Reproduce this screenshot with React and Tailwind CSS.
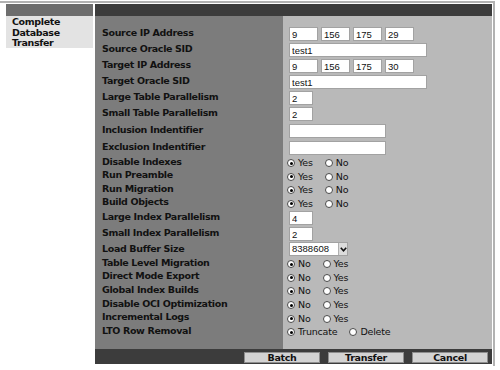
import React from "react";

function Radio({ checked }) {
  return (
    <span className="inline-flex items-center justify-center w-[8px] h-[8px] rounded-full border border-[#4a4a4a] bg-white shrink-0">
      {checked && <span className="w-[3px] h-[3px] rounded-full bg-black" />}
    </span>
  );
}

function RadioGroup({ options }) {
  return (
    <div className="flex items-center pl-[4px] pt-[3px]">
      {options.map((o, i) => (
        <div key={i} className="flex items-center mr-[12px]">
          <Radio checked={o.checked} />
          <span className="ml-[3px] text-[9.5px] leading-[10px] tracking-[-0.2px] text-[#111] font-['DejaVu_Sans',sans-serif]">
            {o.label}
          </span>
        </div>
      ))}
    </div>
  );
}

function Box({ value, className }) {
  return (
    <input
      readOnly
      value={value}
      className={
        "h-[14px] bg-white border border-[#a2a2a2] px-[2px] text-[9.5px] leading-[12px] text-[#111] font-['Liberation_Sans',Arial,sans-serif] outline-none " +
        className
      }
    />
  );
}

function IpBoxes({ parts }) {
  return (
    <div className="flex gap-[3px] pl-[6px] pt-[2px]">
      {parts.map((p, i) => (
        <Box key={i} value={p} className="w-[29px]" />
      ))}
    </div>
  );
}

function Field({ value, className }) {
  return (
    <div className="flex pl-[6px] pt-[2px]">
      <Box value={value} className={className} />
    </div>
  );
}

function SelectBox() {
  return (
    <div className="flex pl-[6px] pt-[1px]">
      <div className="flex w-[59px] h-[14px] bg-white border border-[#a2a2a2]">
        <span className="flex-1 pl-[2px] text-[9.5px] leading-[12px] text-[#111] font-['Liberation_Sans',Arial,sans-serif]">
          8388608
        </span>
        <span className="w-[9px] h-full bg-[#dcdcdc] border-l border-[#b0b0b0] flex items-center justify-center">
          <svg width="7" height="5" viewBox="0 0 7 5">
            <path d="M0.8 0.8 L3.5 3.8 L6.2 0.8" fill="none" stroke="#111" strokeWidth="1.6" />
          </svg>
        </span>
      </div>
    </div>
  );
}

const yesNo = [
  { label: "Yes", checked: true },
  { label: "No", checked: false },
];
const noYes = [
  { label: "No", checked: true },
  { label: "Yes", checked: false },
];

const rows = [
  { label: "Source IP Address", h: "h-[16px]", el: <IpBoxes parts={["9", "156", "175", "29"]} /> },
  { label: "Source Oracle SID", h: "h-[16px]", el: <Field value="test1" className="w-[138px]" /> },
  { label: "Target IP Address", h: "h-[16px]", el: <IpBoxes parts={["9", "156", "175", "30"]} /> },
  { label: "Target Oracle SID", h: "h-[16px]", el: <Field value="test1" className="w-[138px]" /> },
  { label: "Large Table Parallelism", h: "h-[16px]", el: <Field value="2" className="w-[24px]" /> },
  { label: "Small Table Parallelism", h: "h-[16px]", el: <Field value="2" className="w-[24px]" /> },
  { label: "Inclusion Indentifier", h: "h-[17px]", el: <Field value="" className="w-[97px]" /> },
  { label: "Exclusion Indentifier", h: "h-[17px]", el: <Field value="" className="w-[97px]" /> },
  { label: "Disable Indexes", h: "h-[13.5px]", el: <RadioGroup options={yesNo} /> },
  { label: "Run Preamble", h: "h-[13.5px]", el: <RadioGroup options={yesNo} /> },
  { label: "Run Migration", h: "h-[13.5px]", el: <RadioGroup options={yesNo} /> },
  { label: "Build Objects", h: "h-[13.5px]", el: <RadioGroup options={yesNo} /> },
  { label: "Large Index Parallelism", h: "h-[16px]", el: <Field value="4" className="w-[24px]" /> },
  { label: "Small Index Parallelism", h: "h-[16px]", el: <Field value="2" className="w-[24px]" /> },
  { label: "Load Buffer Size", h: "h-[15px]", el: <SelectBox /> },
  { label: "Table Level Migration", h: "h-[13.6px]", el: <RadioGroup options={noYes} /> },
  { label: "Direct Mode Export", h: "h-[13.6px]", el: <RadioGroup options={noYes} /> },
  { label: "Global Index Builds", h: "h-[13.6px]", el: <RadioGroup options={noYes} /> },
  { label: "Disable OCI Optimization", h: "h-[13.6px]", el: <RadioGroup options={noYes} /> },
  { label: "Incremental Logs", h: "h-[13.6px]", el: <RadioGroup options={noYes} /> },
  {
    label: "LTO Row Removal",
    h: "h-[13.6px]",
    el: (
      <RadioGroup
        options={[
          { label: "Truncate", checked: true },
          { label: "Delete", checked: false },
        ]}
      />
    ),
  },
];

function Button({ children }) {
  return (
    <button className="w-[76px] h-[11px] bg-[#d3d3d3] border border-[#8e8e8e] text-[9.5px] leading-[9px] font-bold text-[#111] font-['DejaVu_Sans',sans-serif] tracking-[-0.3px]">
      {children}
    </button>
  );
}

export default function App() {
  return (
    <div className="w-[500px] h-[370px] bg-white overflow-hidden font-['DejaVu_Sans',sans-serif]">
      <div className="mt-[1px] w-[495px] h-[365px] border-t-2 border-r-2 border-[#b2b2b2] pt-[1px] pl-[6px] pr-[1px] flex gap-[2px]">
        {/* left navigation */}
        <div className="w-[87px] flex flex-col">
          <div className="h-[12px] bg-[#6d6d6d]" />
          <div className="h-[32px] bg-[#e3e3e3] pl-[6px] pt-[1px] text-[9.5px] leading-[10.5px] font-bold text-[#111] tracking-[-0.35px]">
            Complete
            <br />
            Database
            <br />
            Transfer
          </div>
        </div>

        {/* main form */}
        <div className="flex-1 flex flex-col">
          <div className="h-[12px] bg-[#3c3c3c]" />
          <div className="h-[333px] flex flex-col">
            <div className="flex h-[9px]">
              <div className="w-[188px] bg-[#7c7c7c]" />
              <div className="flex-1 bg-[#b9b9b9]" />
            </div>
            {rows.map((r, i) => (
              <div key={i} className={"flex " + r.h}>
                <div className="w-[188px] bg-[#7c7c7c] pl-[7px] flex items-center text-[9.5px] leading-[10px] font-bold text-[#111] tracking-[-0.35px] whitespace-nowrap">
                  {r.label}
                </div>
                <div className="flex-1 bg-[#b9b9b9] flex flex-col justify-center">{r.el}</div>
              </div>
            ))}
            <div className="flex flex-1">
              <div className="w-[188px] bg-[#7c7c7c]" />
              <div className="flex-1 bg-[#b9b9b9]" />
            </div>
          </div>
          <div className="h-[15px] bg-[#3c3c3c] flex justify-end items-start gap-[8px] pt-[3px] pr-[4px]">
            <Button>Batch</Button>
            <Button>Transfer</Button>
            <Button>Cancel</Button>
          </div>
        </div>
      </div>
    </div>
  );
}
